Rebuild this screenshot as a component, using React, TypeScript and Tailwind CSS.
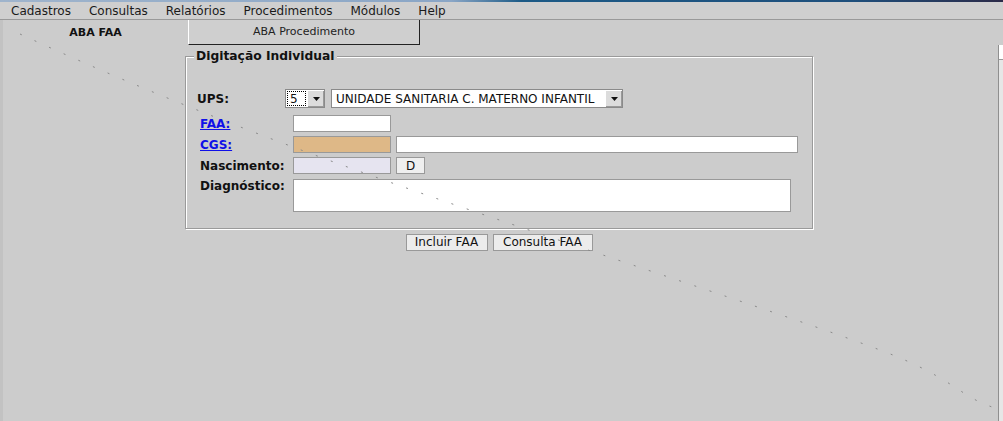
import React from "react";

const font = "font-['DejaVu_Sans','Liberation_Sans',sans-serif]";

function Arrow() {
  return (
    <div className="flex h-full w-[17px] shrink-0 items-center justify-center border-l border-t border-white bg-[#dcdcdc] shadow-[inset_-1px_-1px_0_#9a9a9a]">
      <svg width="7" height="4" viewBox="0 0 7 4">
        <path d="M0 0H7L3.5 4Z" fill="#111" />
      </svg>
    </div>
  );
}

function FieldLabel({ children, link }: { children: React.ReactNode; link?: boolean }) {
  return (
    <span
      className={
        link
          ? "w-[107px] shrink-0 pl-[14px] text-[12px] font-bold text-[#1010e8] underline"
          : "w-[107px] shrink-0 pl-[14px] text-[12px] font-bold text-[#111]"
      }
    >
      {children}
    </span>
  );
}

export default function App() {
  const menu = ["Cadastros", "Consultas", "Relatórios", "Procedimentos", "Módulos", "Help"];

  return (
    <div className={`${font} relative flex h-[421px] w-[1003px] flex-col overflow-hidden bg-[#cccccc] text-[#111]`}>
      {/* desktop strip */}
      <div className="h-[2px] bg-[linear-gradient(90deg,#9fb4cc_0%,#8aa6c6_45%,#1c5a86_52%,#1e4f7c_85%,#2b2a48_100%)]" />

      {/* menu bar */}
      <div className="flex h-[18px] items-center gap-[18px] border-b border-[#999] bg-[#cfcfcf] pl-[11px] text-[12px] text-[#1a1a1a]">
        {menu.map((m) => (
          <span key={m}>{m}</span>
        ))}
      </div>

      <div className="flex flex-1">
        <div className="w-[3px] bg-[#c2c2c2]" />

        <div className="flex flex-1 flex-col">
          {/* tabs */}
          <div className="flex h-[25px]">
            <div className="flex w-[185px] items-center justify-center pt-[1px] text-[11px] font-bold">ABA FAA</div>
            <div className="flex w-[232px] items-center justify-center border-b border-r border-[#222] border-l border-l-white bg-[#cfcfcf] text-[11px] text-[#222]">
              ABA Procedimento
            </div>
          </div>

          <div className="flex flex-1">
            <div className="flex-1">
              {/* fieldset */}
              <div className="relative ml-[182px] mt-[11px] h-[173px] w-[628px] border border-[#9a9a9a] shadow-[inset_1px_1px_0_#fff,1px_1px_0_#fff]">
                <span className="absolute -top-[10px] left-[8px] bg-[#cccccc] px-[2px] text-[12.3px] font-bold leading-[18px]">
                  Digitação Individual
                </span>

                <div className="flex flex-col pt-[32px]">
                  <div className="flex h-[19px] items-center">
                    <span className="w-[99px] shrink-0 pl-[11px] text-[12px] font-bold">UPS:</span>
                    <div className="flex h-[19px] w-[40px] border border-[#8a8a8a] bg-white">
                      <div className="m-[1px] flex flex-1 items-center border border-dotted border-black pl-[2px] text-[12px]">5</div>
                      <Arrow />
                    </div>
                    <div className="ml-[6px] flex h-[19px] w-[292px] border border-[#8a8a8a] bg-white">
                      <div className="flex flex-1 items-center pl-[4px] text-[12px]">UNIDADE SANITARIA C. MATERNO INFANTIL</div>
                      <Arrow />
                    </div>
                  </div>

                  <div className="mt-[7px] flex h-[17px] items-center">
                    <FieldLabel link>FAA:</FieldLabel>
                    <div className="h-[17px] w-[98px] border border-[#999] bg-white" />
                  </div>

                  <div className="mt-[4px] flex h-[17px] items-center">
                    <FieldLabel link>CGS:</FieldLabel>
                    <div className="h-[17px] w-[98px] border border-[#999] bg-[#deb887]" />
                    <div className="ml-[5px] h-[17px] w-[402px] border border-[#999] bg-white" />
                  </div>

                  <div className="mt-[4px] flex h-[17px] items-center">
                    <FieldLabel>Nascimento:</FieldLabel>
                    <div className="h-[17px] w-[98px] border border-[#999] bg-[#e6e4f0]" />
                    <div className="ml-[5px] flex h-[17px] w-[29px] items-center justify-center border border-[#999] bg-[#efefef] text-[12px]">
                      D
                    </div>
                  </div>

                  <div className="mt-[5px] flex items-start">
                    <span className="w-[107px] shrink-0 pl-[14px] text-[12px] font-bold leading-[15px]">Diagnóstico:</span>
                    <div className="h-[33px] w-[498px] border border-[#999] bg-white" />
                  </div>
                </div>
              </div>

              {/* actions */}
              <div className="ml-[182px] mt-[5px] flex w-[628px] justify-center gap-[5px]">
                <button type="button" className="h-[17px] w-[82px] border border-[#999] bg-[#ececec] text-[12px] leading-[15px] text-[#111]">
                  Incluir FAA
                </button>
                <button type="button" className="h-[17px] w-[100px] border border-[#999] bg-[#ececec] text-[12px] leading-[15px] text-[#111]">
                  Consulta FAA
                </button>
              </div>
            </div>

            {/* right panel edge */}
            <div className="flex w-[5px] flex-col border-l border-[#8f8f8f] bg-[#e6e6e6]">
              <div className="h-[15px] border-b border-[#999] bg-white" />
            </div>
          </div>
        </div>
      </div>

      {/* drag trail */}
      <svg className="pointer-events-none absolute left-0 top-0" width="1003" height="421">
        <path
          d="M20 34 C 120 80, 250 135, 470 210 S 800 320, 880 350 S 960 400, 1003 410"
          fill="none"
          stroke="#8a8a8a"
          strokeWidth="1"
          strokeDasharray="2 14"
        />
      </svg>
    </div>
  );
}
